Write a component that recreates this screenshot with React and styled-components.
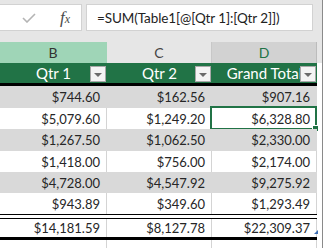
import React from "react";
import styled, { createGlobalStyle } from "styled-components";

const Global = createGlobalStyle`
  html, body { margin: 0; padding: 0; background: #fff; }
  body { width: 323px; height: 248px; overflow: hidden; }
`;

const Window = styled.div`
  width: 322px;
  height: 248px;
  border-right: 1px solid #8a8a8a;
  display: flex;
  flex-direction: column;
  overflow: hidden;
  background: #fff;
  font-family: Lato, "Open Sans", sans-serif;
`;

const FormulaBar = styled.div`
  flex: none;
  height: 42px;
  box-sizing: border-box;
  padding: 4px 9px 11px 0;
  background: #e6e6e6;
  display: flex;
  gap: 4px;
`;

const ActionBox = styled.div`
  width: 82px;
  box-sizing: border-box;
  background: #fff;
  border: 1px solid #d2d2d2;
  border-left: none;
  display: flex;
  align-items: center;
  padding-left: 22px;
  gap: 24px;
`;

const Fx = styled.span`
  font-family: "Liberation Serif", serif;
  font-style: italic;
  font-size: 17px;
  color: #4a4a4a;
  line-height: 1;
  margin-top: -1px;
  & small { font-size: 12px; }
`;

const FormulaInput = styled.div`
  flex: 1;
  box-sizing: border-box;
  background: #fff;
  border: 1px solid #d2d2d2;
  padding-left: 10px;
  display: flex;
  align-items: center;
  font-size: 13.5px;
  letter-spacing: -0.1px;
  color: #222;
  white-space: nowrap;
  overflow: hidden;
`;

const Row = styled.div`
  flex: none;
  display: flex;
  height: ${(p) => p.$h}px;
`;

const ColHead = styled.div`
  box-sizing: border-box;
  width: ${(p) => p.$w}px;
  background: ${(p) => p.$bg};
  color: ${(p) => p.$fg};
  border-right: 1px solid ${(p) => p.$line};
  display: flex;
  align-items: center;
  justify-content: center;
  font-size: 14px;
`;

const HeadCell = styled.div`
  position: relative;
  box-sizing: border-box;
  width: ${(p) => p.$w}px;
  background: #217346;
  border-bottom: 3px solid #000;
  color: #fff;
  font-size: 15px;
  display: flex;
  align-items: center;
  justify-content: center;
  white-space: nowrap;
  overflow: hidden;
`;

const FilterButton = styled.div`
  position: absolute;
  right: 1px;
  top: 3px;
  width: 16px;
  height: 16px;
  box-sizing: border-box;
  background: #f4f4f4;
  border: 1px solid #a8a8a8;
  display: flex;
  align-items: center;
  justify-content: center;
  &::after {
    content: "";
    width: 0;
    height: 0;
    border-left: 4px solid transparent;
    border-right: 4px solid transparent;
    border-top: 4px solid #6b6b6b;
    margin-top: 1px;
  }
`;

const Cell = styled.div`
  position: relative;
  box-sizing: border-box;
  width: ${(p) => p.$w}px;
  padding-right: 6px;
  display: flex;
  align-items: center;
  justify-content: flex-end;
  background: ${(p) => (p.$band ? "#d9d9d9" : "#fff")};
  border-right: 1px solid ${(p) => (p.$band ? "#d9d9d9" : "#d4d4d4")};
  font-size: 13px;
  color: #262626;
  white-space: nowrap;
`;

const Spare = styled.div`
  flex: none;
  width: 5px;
  background: ${(p) => p.$bg || "#fff"};
`;

const Selection = styled.div`
  position: absolute;
  left: -2px;
  right: -1px;
  top: -2px;
  bottom: -1px;
  border: 2px solid #217346;
  pointer-events: none;
`;

const FillHandle = styled.div`
  position: absolute;
  right: -4px;
  bottom: -4px;
  width: 5px;
  height: 5px;
  background: #217346;
  border: 1px solid #fff;
`;

const TotalBand = styled.div`
  display: flex;
  width: 317px;
  box-sizing: border-box;
  padding-top: 5px;
  border-bottom: 3px solid #000;
  background: linear-gradient(
      #000 0 1px,
      #fff 1px 4px,
      #000 4px 5px,
      #fff 5px
    );
`;

const ResizeGrip = styled.div`
  position: absolute;
  right: -2px;
  bottom: 3px;
  width: 0;
  height: 0;
  border-left: 4px solid transparent;
  border-bottom: 4px solid #3b6db3;
`;

const widths = [107, 105, 105];

const data = [
  ["$744.60", "$162.56", "$907.16"],
  ["$5,079.60", "$1,249.20", "$6,328.80"],
  ["$1,267.50", "$1,062.50", "$2,330.00"],
  ["$1,418.00", "$756.00", "$2,174.00"],
  ["$4,728.00", "$4,547.92", "$9,275.92"],
  ["$943.89", "$349.60", "$1,293.49"],
];
const rowHeights = [22, 21, 22, 21, 21, 21];
const totals = ["$14,181.59", "$8,127.78", "$22,309.37"];
const headers = ["Qtr 1", "Qtr 2", "Grand Total"];
const letters = [
  { l: "B", bg: "#9fd5b7", fg: "#333", line: "#9fd5b7" },
  { l: "C", bg: "#e6e6e6", fg: "#444", line: "#c8c8c8" },
  { l: "D", bg: "#d2d2d2", fg: "#217346", line: "#bcbcbc" },
];

function CheckIcon() {
  return (
    <svg width="14" height="10" viewBox="0 0 14 10" fill="none">
      <path d="M1 5 L5 9 L13 1" stroke="#b4b4b4" strokeWidth="1.6" />
    </svg>
  );
}

export default function App() {
  return (
    <>
      <Global />
      <Window>
        <FormulaBar>
          <ActionBox>
            <CheckIcon />
            <Fx>
              f<small>x</small>
            </Fx>
          </ActionBox>
          <FormulaInput>=SUM(Table1[@[Qtr 1]:[Qtr 2]])</FormulaInput>
        </FormulaBar>

        <Row $h={21}>
          {letters.map((c, i) => (
            <ColHead key={c.l} $w={widths[i]} $bg={c.bg} $fg={c.fg} $line={c.line}>
              {c.l}
            </ColHead>
          ))}
          <Spare $bg="#e6e6e6" />
        </Row>

        <Row $h={23}>
          {headers.map((h, i) => (
            <HeadCell key={h} $w={widths[i]}>
              {h}
              <FilterButton />
            </HeadCell>
          ))}
          <Spare />
        </Row>

        {data.map((r, ri) => (
          <Row key={ri} $h={rowHeights[ri]}>
            {r.map((v, ci) => (
              <Cell key={ci} $w={widths[ci]} $band={ri % 2 === 0}>
                {v}
                {ri === 1 && ci === 2 && (
                  <Selection>
                    <FillHandle />
                  </Selection>
                )}
              </Cell>
            ))}
            <Spare />
          </Row>
        ))}

        <Row $h={26}>
          <TotalBand>
            {totals.map((v, ci) => (
              <Cell key={ci} $w={widths[ci]}>
                {v}
                {ci === 2 && <ResizeGrip />}
              </Cell>
            ))}
          </TotalBand>
          <Spare />
        </Row>

        <Row $h={20}>
          {widths.map((w, i) => (
            <Cell key={i} $w={w} />
          ))}
          <Spare />
        </Row>
      </Window>
    </>
  );
}
